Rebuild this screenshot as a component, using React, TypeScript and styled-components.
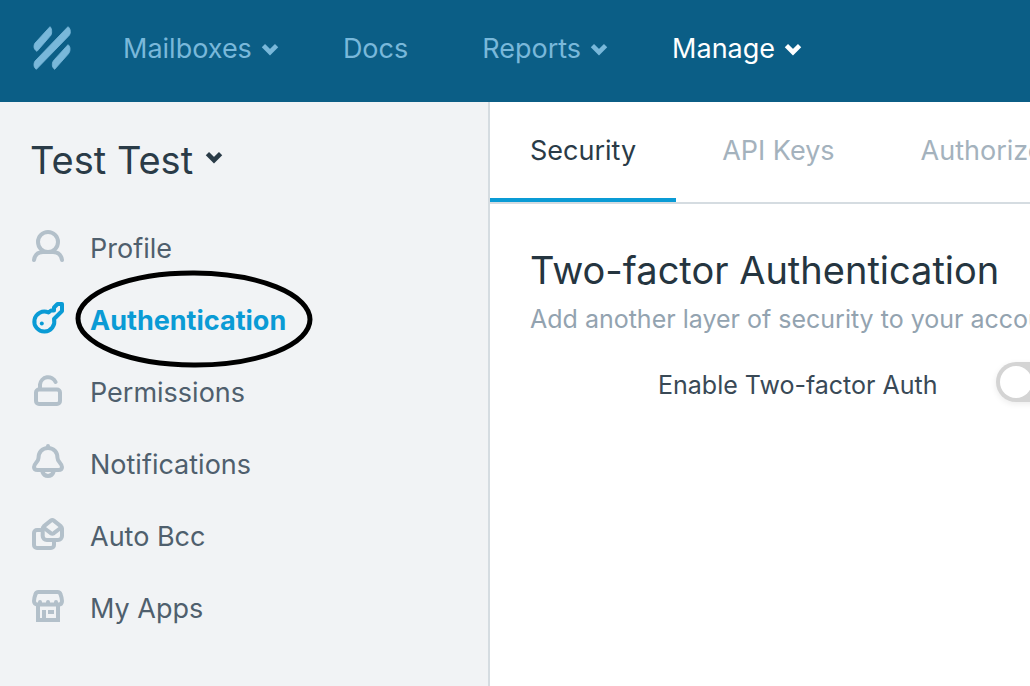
import React from "react";
import styled, { createGlobalStyle } from "styled-components";

const GlobalStyle = createGlobalStyle`
  * { box-sizing: border-box; }
  html, body, #root { height: 100%; }
  body {
    margin: 0;
    background: #fff;
    color: #253540;
    font-family: Inter, "Liberation Sans", sans-serif;
    overflow-x: hidden;
  }
  button { font: inherit; color: inherit; background: none; border: 0; padding: 0; cursor: pointer; }
  a { text-decoration: none; }
`;

const Page = styled.div`
  display: flex;
  flex-direction: column;
  min-height: 100%;
`;

const TopBar = styled.header`
  display: flex;
  align-items: center;
  height: 102px;
  padding: 0 32px 4px;
  background: #0b5e86;
`;

const HomeLink = styled.a`
  display: flex;
  margin-right: 49px;
  padding-bottom: 2px;
  color: #79b8da;
`;

const MainNav = styled.nav`
  display: flex;
  gap: 64px;
`;

const NavItem = styled.button<{ $active?: boolean; $plain?: boolean }>`
  display: flex;
  align-items: center;
  gap: 9px;
  padding-right: ${(p) => (p.$plain ? 10 : 0)}px;
  font-size: 27px;
  line-height: 36px;
  white-space: nowrap;
  && { color: ${(p) => (p.$active ? "#fff" : "#79b8da")}; }
`;

const Body = styled.div`
  display: flex;
  flex: 1;
`;

const Sidebar = styled.aside`
  flex: 0 0 490px;
  padding: 34px 30px;
  background: #f1f3f5;
  border-right: 2px solid #d5dce1;
`;

const AccountButton = styled.button`
  display: flex;
  align-items: center;
  gap: 12px;
  font-size: 38px;
  line-height: 48px;
  margin-bottom: 28px;
  white-space: nowrap;
  && { color: #2a3b47; }
  svg { margin-bottom: 6px; }
`;

const SideList = styled.ul`
  list-style: none;
  margin: 0;
  padding: 0 0 0 2px;
`;

const SideItem = styled.li`
  position: relative;
`;

const SideLink = styled.a<{ $active?: boolean }>`
  display: flex;
  align-items: center;
  gap: 26px;
  height: 72px;
  padding-top: 2px;
  font-size: 27px;
  line-height: 36px;
  font-weight: ${(p) => (p.$active ? 700 : 400)};
  color: ${(p) => (p.$active ? "#0a9bd5" : "#4f5f6d")};
  svg {
    color: ${(p) => (p.$active ? "#0a9bd5" : "#b3c0ca")};
    margin-bottom: 6px;
    flex: none;
  }
`;

const Circled = styled.svg`
  position: absolute;
  left: 43px;
  top: -14px;
  pointer-events: none;
`;

const Main = styled.main`
  flex: 1;
  min-width: 0;
  overflow: hidden;
`;

const Tabs = styled.nav`
  display: flex;
  height: 102px;
  border-bottom: 2px solid #d5dce1;
`;

const Tab = styled.a<{ $active?: boolean }>`
  flex: none;
  padding: 31px 40px 0;
  margin-right: 6px;
  font-size: 27px;
  line-height: 36px;
  white-space: nowrap;
  color: ${(p) => (p.$active ? "#2a3b47" : "#a4b2bd")};
  border-bottom: 4px solid ${(p) => (p.$active ? "#0a9bd5" : "transparent")};
`;

const Section = styled.section`
  padding: 42px 40px;
  white-space: nowrap;
`;

const Title = styled.h1`
  margin: 0;
  font-size: 38px;
  line-height: 48px;
  font-weight: 400;
`;

const Lead = styled.p`
  margin: 8px 0 0;
  font-size: 25px;
  line-height: 34px;
  color: #93a3b0;
`;

const SettingRow = styled.div`
  display: flex;
  align-items: center;
  gap: 59px;
  margin-top: 25px;
  padding-left: 128px;
`;

const SettingLabel = styled.label`
  font-size: 25px;
  line-height: 48px;
  color: #394956;
`;

const Switch = styled.input`
  appearance: none;
  flex: none;
  width: 72px;
  height: 40px;
  margin: 0 0 6px;
  padding: 4px;
  border-radius: 20px;
  background: #d4d4d4;
  box-shadow: 0 2px 6px rgba(0, 0, 0, 0.08);
  &::before {
    content: "";
    display: block;
    width: 32px;
    height: 32px;
    border-radius: 50%;
    background: #fff;
  }
  &:checked { background: #0a9bd5; }
  &:checked::before { margin-left: 32px; }
`;

const Chevron = () => (
  <svg width="18" height="14" viewBox="0 0 18 14" fill="none" stroke="currentColor" strokeWidth="4.6" aria-hidden="true">
    <path d="M2.4 3.6 9 10.2l6.600-6.600" />
  </svg>
);

const Logo = () => (
  <svg
    width="42"
    height="45"
    viewBox="96 77 126 135"
    fill="currentColor"
    stroke="currentColor"
    strokeWidth="2.500"
    strokeLinejoin="round"
    aria-hidden="true"
  >
    <path d="M150 79c4 4 5 9 5 15 0 6-1 10-5 14l-39 45c-6-4-9-8-9-14 0-6 2-10 6-14z" />
    <path d="M204 79c5 4 7 9 7 15 0 6-2 10-6 14L109 207c-5-4-7-8-7-14 0-6 2-10 6-14z" />
    <path d="M204 133c5 4 6 8 6 14 0 6-2 10-6 15l-40 45c-5-4-7-8-7-14 0-6 2-11 6-15z" />
  </svg>
);

const Icon = ({ children }: { children: React.ReactNode }) => (
  <svg
    width="32"
    height="32"
    viewBox="0 0 32 32"
    overflow="visible"
    fill="none"
    stroke="currentColor"
    strokeWidth="4"
    strokeLinecap="round"
    strokeLinejoin="round"
    aria-hidden="true"
  >
    {children}
  </svg>
);

const items = [
  {
    label: "Profile",
    icon: (
      <>
        <circle cx="16" cy="12" r="10" />
        <path d="M2 30c.8-4.800 4-8 9-8h10c5 0 8.200 3.200 9 8" />
      </>
    ),
  },
  {
    label: "Authentication",
    icon: (
      <>
        <path d="M22 17l8-8V2h-4.500L22 5.500V8.500H19l-2.500 2A10 10 0 1 0 22 17z" />
        <circle cx="9.800" cy="21.500" r="2" fill="currentColor" stroke="none" />
      </>
    ),
  },
  {
    label: "Permissions",
    icon: (
      <>
        <rect x="4" y="15.500" width="24" height="14.500" rx="3" />
        <path d="M8 15v-4.500a8.200 8.200 0 0 1 15.600-2.500" />
      </>
    ),
  },
  {
    label: "Notifications",
    icon: (
      <>
        <path d="M16 2C10 2 6.500 6.500 6.500 12 6.500 16 2 17.500 2 21c0 2 1.500 3 3.500 3h21c2 0 3.500-1 3.500-3 0-3.500-4.500-5-4.500-9C25.500 6.500 22 2 16 2z" />
        <path d="M10.500 26c1 2.700 3 4 5.500 4s4.500-1.300 5.500-4M16 0v1" />
      </>
    ),
  },
  {
    label: "Auto Bcc",
    icon: (
      <>
        <path d="M8.500 12H5a3 3 0 0 0-3 3v12a3 3 0 0 0 3 3h14a3 3 0 0 0 3-3v-3" />
        <path d="M10.700 10.500c0-1 .3-1.500 1-2.100L18.800 2.600a2.400 2.400 0 0 1 3 0L29 8.400c.7.600 1 1.100 1 2.100V18a4 4 0 0 1-4 4H14.700a4 4 0 0 1-4-4z" />
        <path d="M12 10l6.800 5.200a2.800 2.800 0 0 0 3 0L28.600 10" />
      </>
    ),
  },
  {
    label: "My Apps",
    icon: (
      <>
        <path d="M6.500 2h19c1.600 0 2.600.8 3 2.200.9 2.300 1.500 4.300 1.500 6.800 0 2.300-1.200 3.500-3.500 3.500h-21C3.200 14.500 2 13.300 2 11c0-2.500.6-4.500 1.500-6.800.4-1.400 1.400-2.200 3-2.200z" />
        <path d="M8 12v1M16 12v1M24 12v1" />
        <path d="M6 15v15h20V15" strokeLinejoin="miter" />
        <path d="M12 20v9M16 22h6" strokeLinecap="butt" />
      </>
    ),
  },
];

export default function App() {
  return (
    <Page>
      <GlobalStyle />
      <TopBar>
        <HomeLink href="#" aria-label="Home">
          <Logo />
        </HomeLink>
        <MainNav>
          <NavItem>Mailboxes <Chevron /></NavItem>
          <NavItem $plain>Docs</NavItem>
          <NavItem>Reports <Chevron /></NavItem>
          <NavItem $active>Manage <Chevron /></NavItem>
        </MainNav>
      </TopBar>
      <Body>
        <Sidebar>
          <AccountButton>Test Test <Chevron /></AccountButton>
          <SideList>
            {items.map((item) => {
              const active = item.label === "Authentication";
              return (
                <SideItem key={item.label}>
                  <SideLink href="#" $active={active}>
                    <Icon>{item.icon}</Icon>
                    {item.label}
                  </SideLink>
                  {active && (
                    <Circled width="238" height="98" viewBox="0 0 238 98" fill="none" stroke="#000" strokeWidth="5" aria-hidden="true">
                      <ellipse cx="119" cy="49" rx="116" ry="46" transform="rotate(.3 119 49)" />
                    </Circled>
                  )}
                </SideItem>
              );
            })}
          </SideList>
        </Sidebar>
        <Main>
          <Tabs>
            <Tab href="#" $active>Security</Tab>
            <Tab href="#">API Keys</Tab>
            <Tab href="#">Authorized Apps</Tab>
          </Tabs>
          <Section>
            <Title>Two-factor Authentication</Title>
            <Lead>Add another layer of security to your account.</Lead>
            <SettingRow>
              <SettingLabel htmlFor="two-factor">Enable Two-factor Auth</SettingLabel>
              <Switch id="two-factor" type="checkbox" role="switch" />
            </SettingRow>
          </Section>
        </Main>
      </Body>
    </Page>
  );
}
